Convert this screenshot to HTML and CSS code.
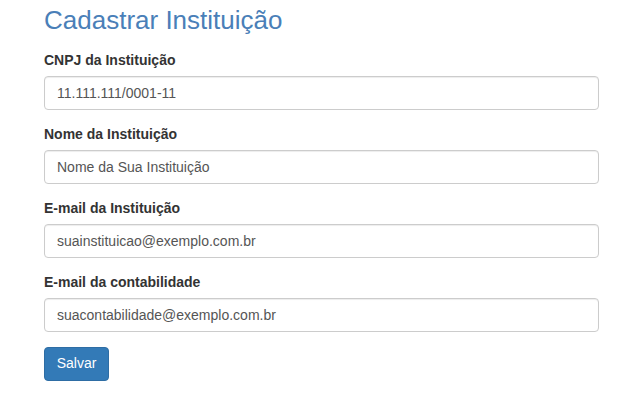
FILE: index.html
```html
<!DOCTYPE html>
<html lang="pt-BR">
<head>
<meta charset="utf-8">
<title>Cadastrar Instituição</title>
<link rel="stylesheet" href="styles.css">
</head>
<body>
<div class="container">
  <h2 class="title">Cadastrar Instituição</h2>
  <form class="form">
    <div class="form-group">
      <label class="label" for="cnpj">CNPJ da Instituição</label>
      <input class="form-control" id="cnpj" type="text" placeholder="11.111.111/0001-11">
    </div>
    <div class="form-group">
      <label class="label" for="nome">Nome da Instituição</label>
      <input class="form-control" id="nome" type="text" placeholder="Nome da Sua Instituição">
    </div>
    <div class="form-group">
      <label class="label" for="email">E-mail da Instituição</label>
      <input class="form-control" id="email" type="text" placeholder="suainstituicao@exemplo.com.br">
    </div>
    <div class="form-group">
      <label class="label" for="contab">E-mail da contabilidade</label>
      <input class="form-control" id="contab" type="text" placeholder="suacontabilidade@exemplo.com.br">
    </div>
    <button class="btn" type="button">Salvar</button>
  </form>
</div>
</body>
</html>
```

FILE: styles.css
```css
* { box-sizing: border-box; }
html, body { margin: 0; padding: 0; background: #fff; }
body {
  font-family: "Liberation Sans", Arial, sans-serif;
  font-size: 14px;
  line-height: 1.42857;
  color: #333;
}
.container {
  width: 555px;
  margin-left: 44px;
}
.title {
  margin: 6px 0 16px;
  font-size: 26px;
  font-weight: 400;
  line-height: 1.1;
  color: #4a7fb8;
}
.form-group { margin-bottom: 15px; }
.label {
  display: block;
  margin-bottom: 5px;
  font-weight: 700;
}
.form-control {
  display: block;
  width: 100%;
  height: 34px;
  padding: 6px 12px;
  font-family: inherit;
  font-size: 14px;
  line-height: 1.42857;
  color: #555;
  background: #fff;
  border: 1px solid #ccc;
  border-radius: 4px;
  box-shadow: inset 0 1px 1px rgba(0,0,0,.075);
}
.form-control::placeholder { color: #555; opacity: 1; }
.btn {
  display: inline-block;
  width: 65px;
  padding: 6px 0;
  font-family: inherit;
  font-size: 14px;
  line-height: 1.42857;
  text-align: center;
  color: #fff;
  background: #337ab7;
  border: 1px solid #2e6da4;
  border-radius: 4px;
}
```
